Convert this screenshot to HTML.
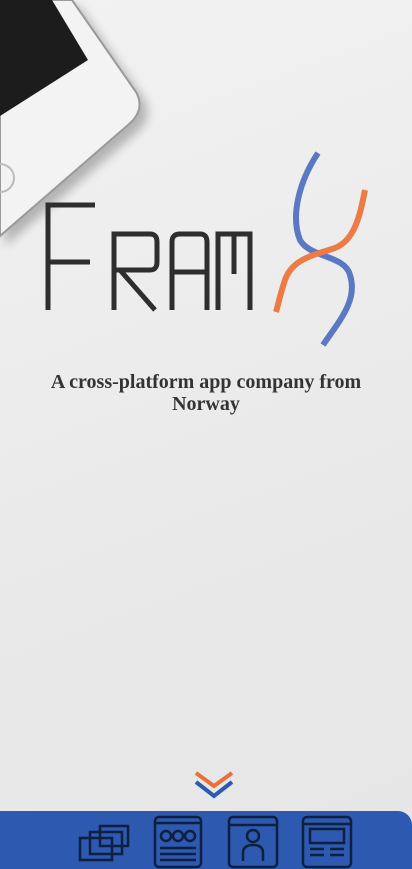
<!DOCTYPE html><html><head><style>
body{margin:0;width:412px;height:869px;overflow:hidden;background:linear-gradient(160deg,#f2f2f2,#e9e9e9 60%,#e6e6e6);font-family:"Liberation Serif",serif;position:relative}
.tag{position:absolute;top:371px;left:0;width:412px;text-align:center;font-weight:bold;font-size:20px;line-height:22px;color:#333}
.bar{position:absolute;left:0;top:811px;width:412px;height:58px;background:#2d59b0;border-radius:0 14px 0 0}
</style></head><body>
<svg width="412" height="869" style="position:absolute;left:0;top:0">
<defs><filter id="s"><feGaussianBlur stdDeviation="5"/></filter></defs>
<path d="M0 0H74L138 92Q150 112 130 128L0 240Z" fill="#000" opacity=".25" filter="url(#s)" transform="translate(5,6)"/>
<path d="M0 0H72L136 92Q146 110 128 125L0 236Z" fill="#f3f3f3" stroke="#9a9a9a" stroke-width="2"/>
<path d="M0 0H52L88 60L0 116Z" fill="#1c1c1c"/>
<circle cx="0" cy="178" r="14" fill="none" stroke="#bbb" stroke-width="2"/>
<g fill="none" stroke="#2e2e2e" stroke-width="5">
<path d="M48 310V205H95M48 262H90"/>
<path d="M114 310V234H150Q157 234 157 242V262Q157 270 150 270H120L155 310M114 270h6"/>
<path d="M172 310V242Q172 234 180 234H200Q207 234 207 242V310M172 272H207"/>
<path d="M218 310V234H250V310M234 234V274"/>
</g>
<path d="M318 153C300 180 290 215 300 240C310 258 345 255 350 275C358 300 340 320 323 345" fill="none" stroke="#5a78c4" stroke-width="6"/>
<path d="M365 190C360 215 355 240 335 248C310 256 292 260 285 280C280 295 278 305 276 312" fill="none" stroke="#ee7a45" stroke-width="6"/>
<path d="M196 773L214 786 232 773" fill="none" stroke="#e8713b" stroke-width="4"/>
<path d="M196 782L214 796 232 782" fill="none" stroke="#2d59b0" stroke-width="4"/>
</svg>
<div class="tag">A cross-platform app company from<br>Norway</div>
<div class="bar"></div>
<svg width="412" height="58" style="position:absolute;left:0;top:811px" fill="none" stroke="#0e1f3f" stroke-width="2.5">
<rect x="80" y="27" width="32" height="22"/>
<rect x="90" y="21" width="32" height="22"/>
<rect x="100" y="15" width="28" height="20"/>
<rect x="155" y="6" width="46" height="50" rx="4"/><circle cx="166" cy="25" r="5"/><circle cx="178" cy="25" r="5"/><circle cx="190" cy="25" r="5"/><path d="M160 37h36M160 43h36M160 49h36M155 12h46"/>
<rect x="229" y="6" width="48" height="50" rx="4"/><circle cx="253" cy="25" r="6"/><path d="M243 50v-8q0-8 10-8t10 8v8M229 14h48"/>
<rect x="303" y="6" width="48" height="50" rx="4"/><rect x="310" y="18" width="34" height="14"/><path d="M310 38h14M310 44h14M330 38h14M330 44h14M303 13h48"/>
</svg>
</body></html>
